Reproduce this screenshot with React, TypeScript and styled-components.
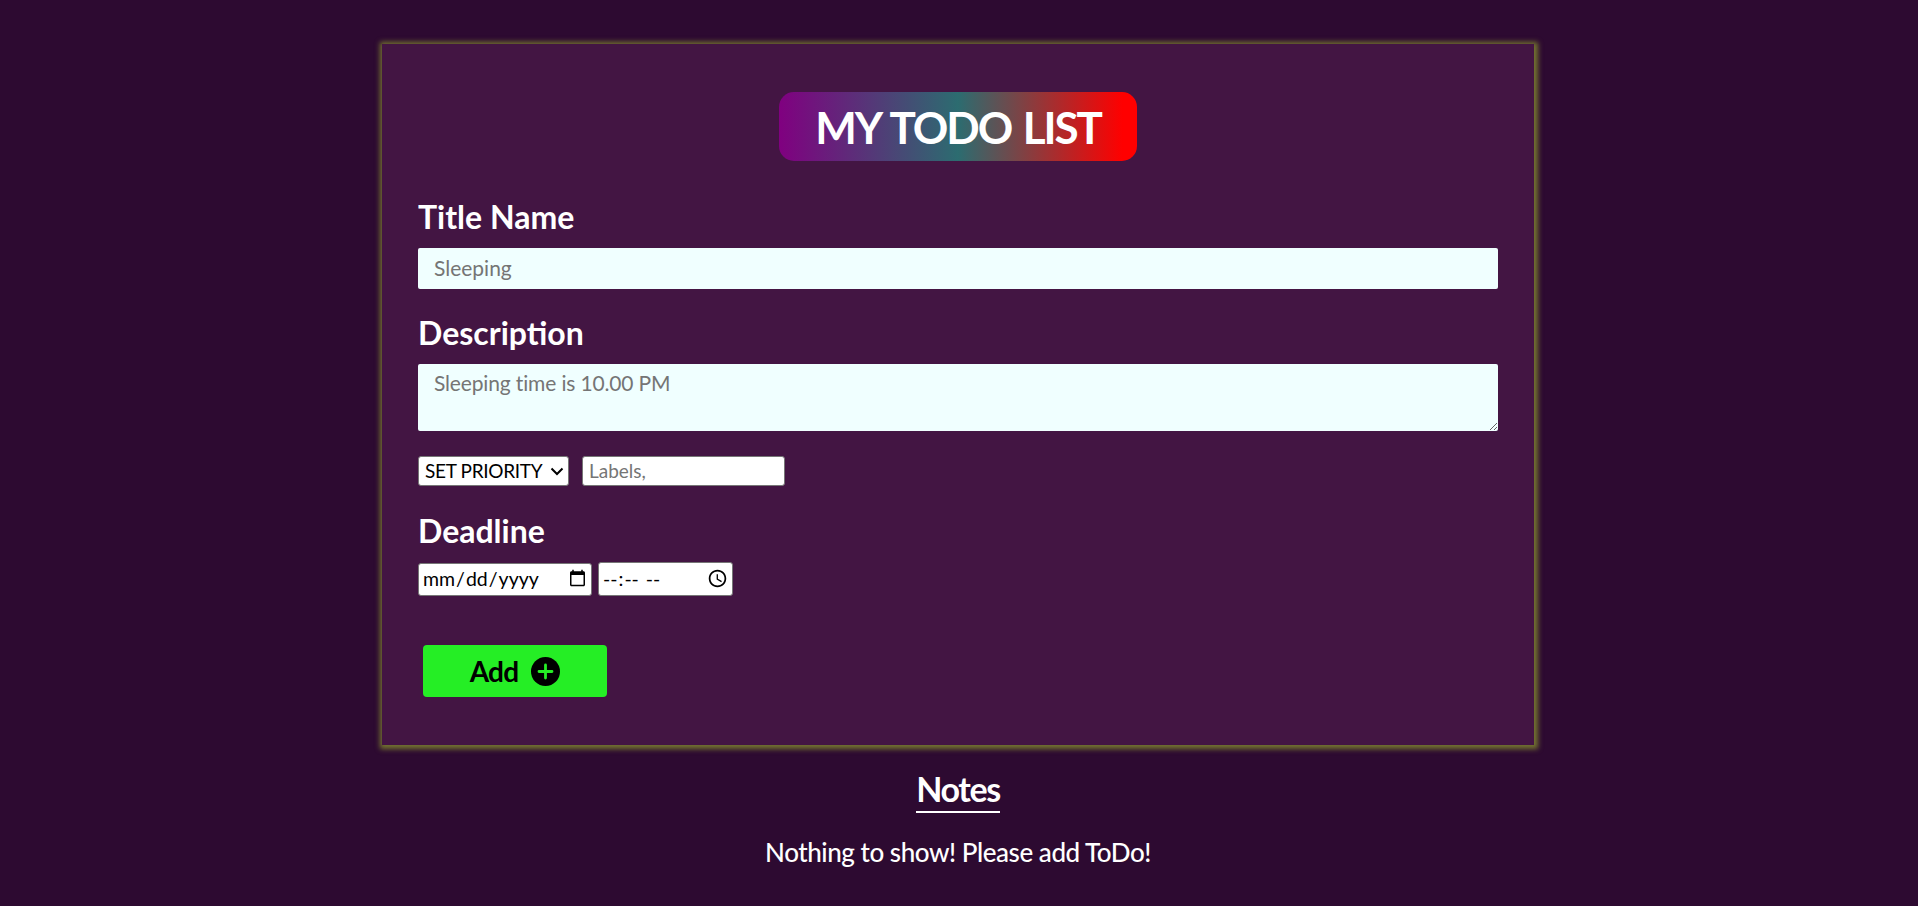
import { createGlobalStyle } from "styled-components";
import styled from "styled-components";

const chevron = `url("data:image/svg+xml,%3Csvg xmlns='http://www.w3.org/2000/svg' width='14' height='9' viewBox='0 0 14 9'%3E%3Cpath d='M1.5 1.5L7 7l5.500-5.500' fill='none' stroke='%23000' stroke-width='2'/%3E%3C/svg%3E")`;

const GlobalStyle = createGlobalStyle`
  html, body {
    margin: 0;
    padding: 0;
    min-height: 906px;
    background-color: #2d0a31;
    color: #ffffff;
    font-family: Lato, "Noto Sans", sans-serif;
    overflow: hidden;
  }
  * {
    box-sizing: border-box;
  }
  input, textarea, select, button {
    font-family: Lato, "Noto Sans", sans-serif;
  }
`;

const Page = styled.div`
  display: flex;
  flex-direction: column;
  align-items: center;
  padding: 44px 2px 0 0;
`;

const Card = styled.form`
  width: 1152px;
  height: 701px;
  padding: 48px 36px 0;
  background-color: #431543;
  box-shadow: 1px 1px 5px 3px #737330;
`;

const Banner = styled.h1`
  width: 358px;
  height: 69px;
  margin: 0 auto 36px;
  display: flex;
  align-items: center;
  justify-content: center;
  border-radius: 15px;
  background: linear-gradient(90deg, purple, #2c6c70 50%, red 96%);
  font-size: 44px;
  font-weight: 700;
  letter-spacing: -2.1px;
  word-spacing: 3px;
`;

const Heading = styled.label`
  display: block;
  font-size: 32px;
  line-height: 40px;
  font-weight: 700;
`;

const TitleInput = styled.input`
  display: block;
  width: 1080px;
  height: 41px;
  margin: 11px 0 24px;
  padding: 0 16px 2px;
  border: 0;
  border-radius: 2px;
  background-color: #f0ffff;
  font-size: 21px;
  &::placeholder {
    color: #757575;
  }
`;

const DescriptionInput = styled.textarea`
  display: block;
  width: 1080px;
  height: 67px;
  margin: 11px 0 25px;
  padding: 6px 16px;
  border: 0;
  border-radius: 2px;
  background-color: #f0ffff;
  font-size: 21px;
  letter-spacing: -0.15px;
  &::placeholder {
    color: #757575;
  }
`;

const Row = styled.div<{ $gap: number }>`
  display: flex;
  align-items: center;
  gap: ${(p) => p.$gap}px;
`;

const PrioritySelect = styled.select`
  appearance: none;
  width: 151px;
  height: 30px;
  padding: 0 6px 2px;
  border: 1px solid #767676;
  border-radius: 3px;
  background: #ffffff ${chevron} no-repeat right 4px center;
  color: #000000;
  font-size: 19px;
  letter-spacing: -0.3px;
`;

const LabelInput = styled.input`
  width: 203px;
  height: 30px;
  padding: 0 6px 2px;
  border: 1px solid #767676;
  border-radius: 3px;
  background-color: #ffffff;
  font-size: 19px;
  &::placeholder {
    color: #757575;
  }
`;

const DeadlineHeading = styled(Heading)`
  margin: 25px 0 11px;
`;

const DateField = styled.input`
  width: 174px;
  height: 33px;
  padding: 0 4px 1px 3px;
  border: 1px solid #767676;
  border-radius: 3px;
  background-color: #ffffff;
  color: #000000;
  font-size: 19.5px;
  &::-webkit-calendar-picker-indicator {
    width: 19px;
    height: 19px;
    margin: 0;
    padding: 0;
  }
`;

const TimeField = styled(DateField)`
  width: 135px;
  height: 34px;
  &::-webkit-calendar-picker-indicator {
    width: 21px;
    height: 21px;
  }
`;

const AddButton = styled.button`
  display: flex;
  align-items: center;
  justify-content: center;
  gap: 13px;
  width: 184px;
  height: 52px;
  margin: 49px 0 0 5px;
  border: 0;
  border-radius: 4px;
  background-color: #25ee25;
  color: #000000;
  font-size: 28px;
  font-weight: 700;
  letter-spacing: -0.8px;
`;

const NotesHeading = styled.h2`
  margin: 23px 0 0;
  padding-bottom: 1px;
  border-bottom: 2px solid #ffffff;
  font-size: 34px;
  line-height: 42px;
  font-weight: 700;
  letter-spacing: -1.4px;
`;

const EmptyText = styled.p`
  margin: 23px 0 0;
  font-size: 26px;
  line-height: 32px;
  font-weight: 500;
  letter-spacing: -0.45px;
`;

const PlusIcon = () => (
  <svg width="29" height="29" viewBox="0 0 29 29" aria-hidden="true">
    <circle cx="14.5" cy="14.5" r="14.5" fill="#000000" />
    <path d="M14.5 8v13M8 14.5h13" stroke="#25ee25" strokeWidth="2.8" strokeLinecap="round" />
  </svg>
);

export default function App() {
  return (
    <>
      <GlobalStyle />
      <Page>
        <Card>
          <Banner>MY TODO LIST</Banner>
          <Heading>Title Name</Heading>
          <TitleInput placeholder="Sleeping" />
          <Heading>Description</Heading>
          <DescriptionInput placeholder="Sleeping time is 10.00 PM" />
          <Row $gap={13}>
            <PrioritySelect defaultValue="">
              <option value="">SET PRIORITY</option>
            </PrioritySelect>
            <LabelInput placeholder="Labels," />
          </Row>
          <DeadlineHeading>Deadline</DeadlineHeading>
          <Row $gap={6}>
            <DateField type="date" />
            <TimeField type="time" />
          </Row>
          <AddButton type="button">
            Add <PlusIcon />
          </AddButton>
        </Card>
        <NotesHeading>Notes</NotesHeading>
        <EmptyText>Nothing to show! Please add ToDo!</EmptyText>
      </Page>
    </>
  );
}
